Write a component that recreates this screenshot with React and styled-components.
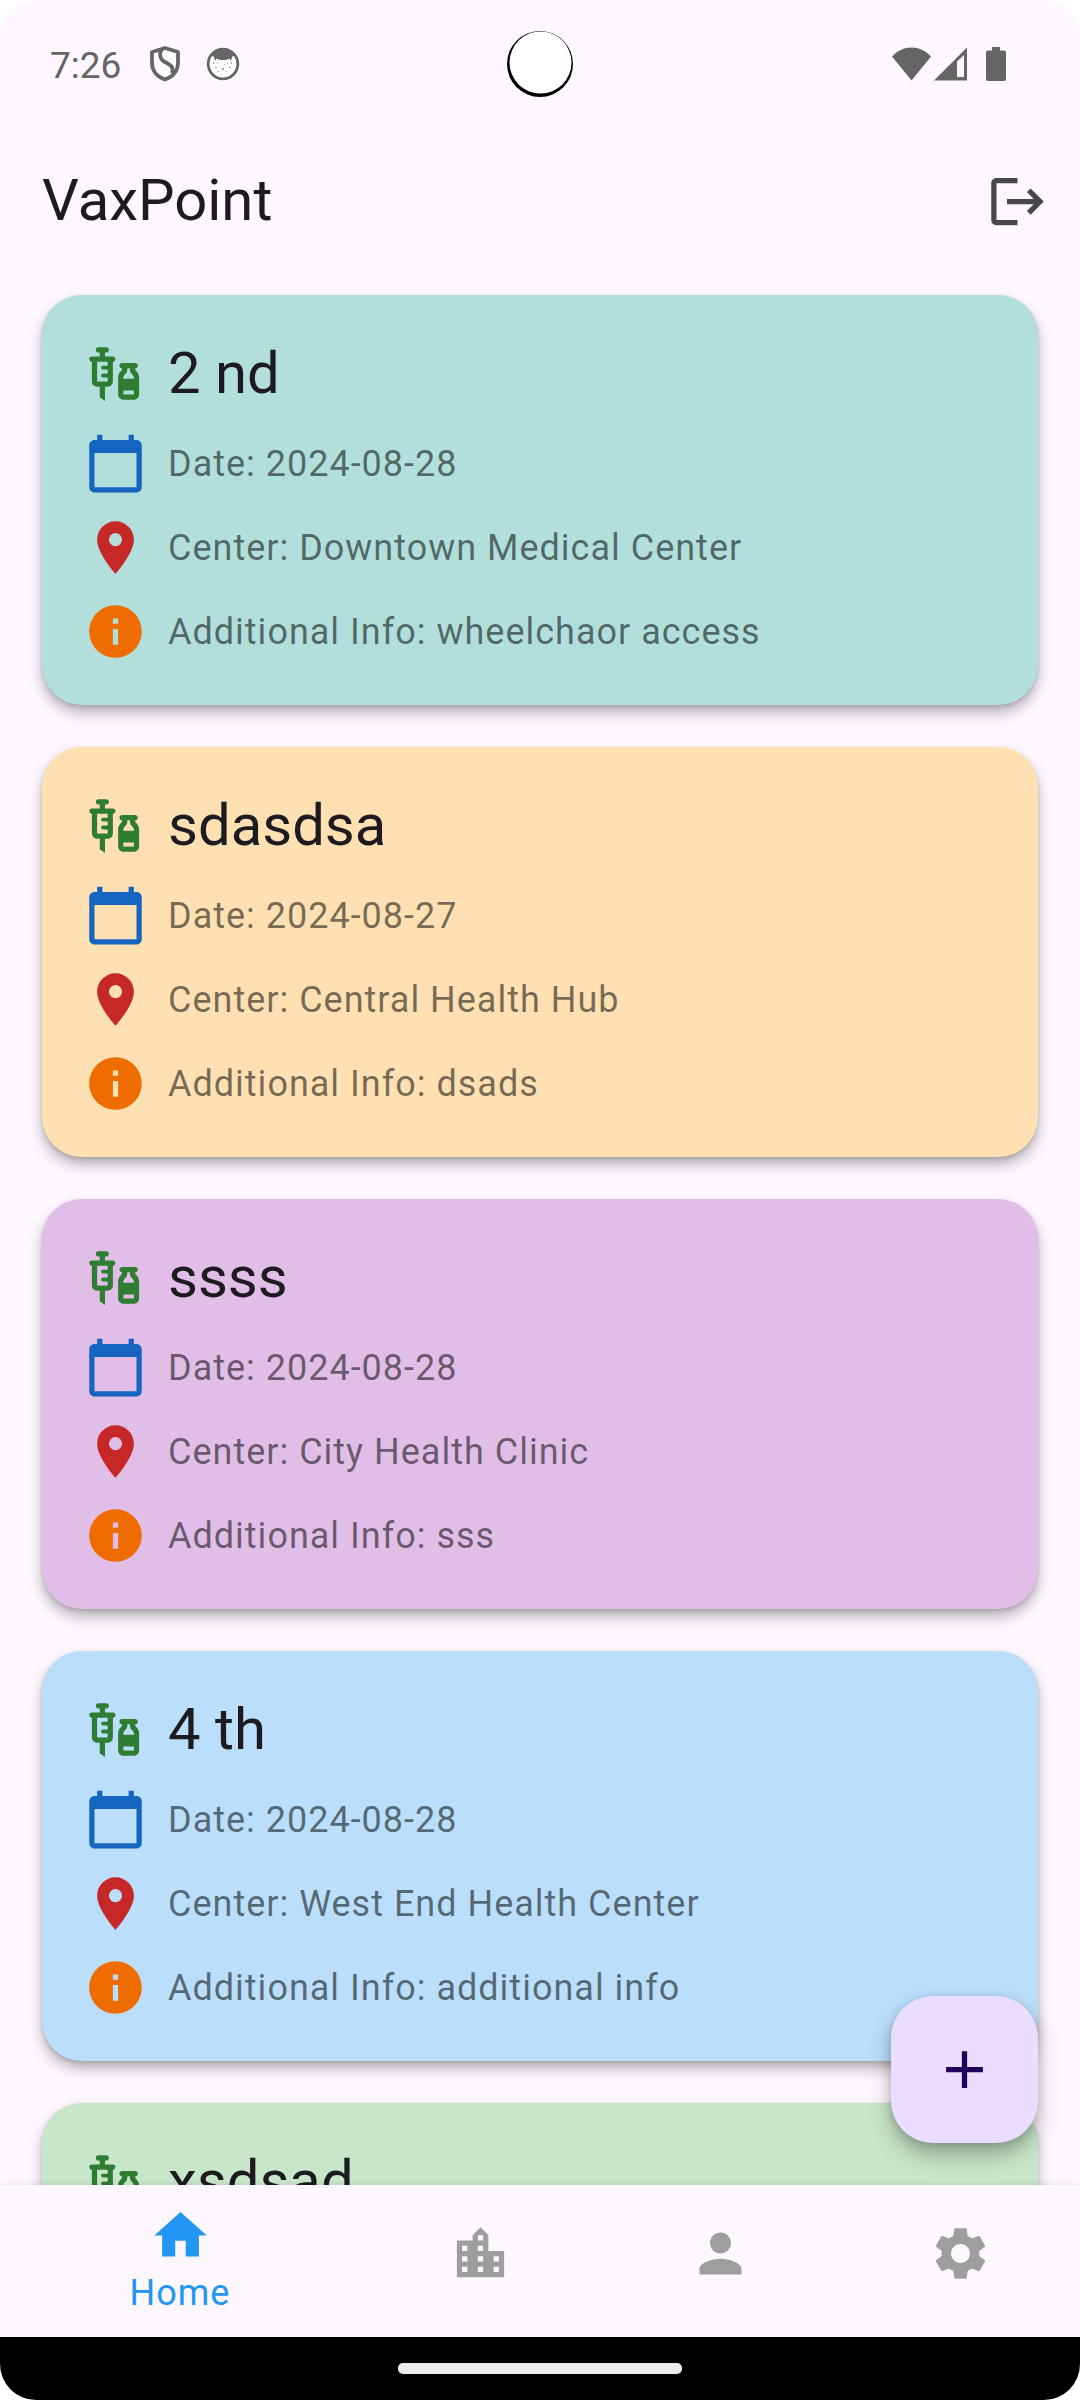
import React from "react";
import styled, { createGlobalStyle } from "styled-components";
import {
  MdAdd,
  MdCalendarToday,
  MdHome,
  MdInfo,
  MdLocationCity,
  MdLocationOn,
  MdLogout,
  MdPerson,
  MdSettings,
  MdVaccines,
} from "react-icons/md";

const GlobalStyle = createGlobalStyle`
  *, *::before, *::after { box-sizing: border-box; }
  body { margin: 0; background: #fff; }
  button { border: 0; padding: 0; font: inherit; color: inherit; background: none; cursor: pointer; }
  h1, h2, p, ul { margin: 0; padding: 0; font-weight: 400; }
`;

const Screen = styled.div`
  display: flex;
  flex-direction: column;
  height: 100vh;
  overflow: hidden;
  border-radius: 36px;
  background: #fef7ff;
  color: #1d1b20;
  font-family: Roboto, "Liberation Sans", sans-serif;
  font-size: 36px;
  line-height: 52px;
`;

const StatusBar = styled.div`
  display: grid;
  grid-template-columns: 1fr auto 1fr;
  align-items: center;
  flex: none;
  height: 126px;
  padding: 2px 50px 0;
  color: #666467;
`;

const StatusGroup = styled.div`
  display: flex;
  align-items: center;
  justify-content: ${(p) => (p.$end ? "flex-end" : "flex-start")};
  padding-right: ${(p) => (p.$end ? 24 : 0)}px;
`;

const Clock = styled.span`
  padding-top: 4px;
  margin-right: 29px;
  font-size: 37px;
`;

const StatusIcon = styled.svg`
  display: block;
  flex: none;
  margin-right: ${(p) => p.$gap || 0}px;
`;

const AppBar = styled.header`
  display: flex;
  align-items: center;
  justify-content: space-between;
  flex: none;
  height: 147px;
  padding-left: 42px;
`;

const AppTitle = styled.h1`
  font-size: 58px;
  line-height: 74px;
`;

const IconButton = styled.button`
  display: grid;
  place-items: center;
  width: 126px;
  height: 126px;
  padding-top: 4px;
  color: #49454f;
`;

const Content = styled.main`
  position: relative;
  flex: 1;
  min-height: 0;
  overflow: hidden;
`;

const CardList = styled.ul`
  display: flex;
  flex-direction: column;
  gap: 42px;
  padding: 22px 42px 0;
  list-style: none;
`;

const Card = styled.li`
  display: flex;
  flex-direction: column;
  gap: 21px;
  padding: 42px;
  border-radius: 40px;
  background: ${(p) => p.$color};
  box-shadow: 0 8px 14px rgba(0, 0, 0, 0.28), 0 2px 4px rgba(0, 0, 0, 0.12);
`;

const Row = styled.div`
  display: flex;
  align-items: center;
  gap: 21px;
  color: ${(p) => p.$color};

  svg {
    flex: none;
  }
`;

const TitleRow = styled(Row)`
  padding-bottom: 2px;
`;

const CardTitle = styled.h2`
  color: #1d1b20;
  font-size: 58px;
  line-height: 72px;
`;

const Detail = styled.p`
  color: rgba(0, 0, 0, 0.54);
  letter-spacing: 1px;
`;

const AddButton = styled.button`
  position: absolute;
  right: 42px;
  bottom: 42px;
  display: grid;
  place-items: center;
  width: 147px;
  height: 147px;
  border-radius: 42px;
  background: #eaddff;
  color: #21005d;
  box-shadow: 0 12px 22px rgba(0, 0, 0, 0.28), 0 2px 8px rgba(0, 0, 0, 0.14);
`;

const BottomNav = styled.nav`
  position: relative;
  display: flex;
  flex: none;
  height: 152px;
  background: #fef7ff;
  box-shadow: 0 0 6px rgba(0, 0, 0, 0.12);
`;

const NavItem = styled.button`
  display: flex;
  flex: ${(p) => (p.$active ? 3 : 2)} 1 0;
  flex-direction: column;
  align-items: center;
  justify-content: center;
  padding-bottom: ${(p) => (p.$active ? 0 : 16)}px;
  color: ${(p) => (p.$active ? "#2196f3" : "#9e9e9e")};
  letter-spacing: 1px;
`;

const GestureArea = styled.footer`
  display: grid;
  place-items: center;
  flex: none;
  height: 63px;
  background: #000;
`;

const GestureHandle = styled.div`
  width: 284px;
  height: 11px;
  border-radius: 5px;
  background: #ececec;
`;

const ICON = 63;

const appointments = [
  { title: "2 nd", color: "#b2dfdb", date: "2024-08-28", center: "Downtown Medical Center", info: "wheelchaor access" },
  { title: "sdasdsa", color: "#ffe0b2", date: "2024-08-27", center: "Central Health Hub", info: "dsads" },
  { title: "ssss", color: "#e1bee7", date: "2024-08-28", center: "City Health Clinic", info: "sss" },
  { title: "4 th", color: "#bbdefb", date: "2024-08-28", center: "West End Health Center", info: "additional info" },
  { title: "xsdsad", color: "#c8e6c9" },
];

const tabs = [
  { name: "Home", Icon: MdHome },
  { name: "Centers", Icon: MdLocationCity },
  { name: "Profile", Icon: MdPerson },
  { name: "Settings", Icon: MdSettings },
];

function Appointment({ title, color, date, center, info }) {
  return (
    <Card $color={color}>
      <TitleRow $color="#2e7d32">
        <MdVaccines size={ICON} />
        <CardTitle>{title}</CardTitle>
      </TitleRow>
      {date && (
        <Row $color="#1565c0">
          <MdCalendarToday size={ICON} />
          <Detail>Date: {date}</Detail>
        </Row>
      )}
      {center && (
        <Row $color="#c62828">
          <MdLocationOn size={ICON} />
          <Detail>Center: {center}</Detail>
        </Row>
      )}
      {info && (
        <Row $color="#ef6c00">
          <MdInfo size={ICON} />
          <Detail>Additional Info: {info}</Detail>
        </Row>
      )}
    </Card>
  );
}

function SystemStatus() {
  return (
    <StatusBar>
      <StatusGroup>
        <Clock>7:26</Clock>
        <StatusIcon $gap={26} width="30" height="36" viewBox="0 0 30 36" fill="none" stroke="currentColor" strokeWidth="3.8" strokeLinejoin="round">
          <path d="M15 2 28 6V17C28 25 22.500 31 15 33.500 7.500 31 2 25 2 17V6Z" fill="#fff" fillOpacity="0.5" />
          <path d="M12 3C9 7 9.500 12 14 15.500 21 19 24 21 22 27" />
        </StatusIcon>
        <StatusIcon width="34" height="34" viewBox="0 0 34 34" fill="currentColor">
          <circle cx="17" cy="17" r="14.800" fill="#fff" stroke="currentColor" strokeWidth="2.800" />
          <path d="M5 7C12-1 22-1 29 7L26 10 25 14 23.500 11.500C20 13.500 14 13.500 10.500 11.500L9 14 8 10Z" />
          <path
            opacity="0.600"
            d="M7 15h1v2h-1zM11 16h1v1h-1zM25 15h1v2h-1zM21 16h1v1h-1zM9 20h2v1h-2zM18 17h1v1h-1zM23 20h2v1h-2zM16 21h2v2h-2zM12 24h1v1h-1zM20 24h1v1h-1zM15 27h1v1h-1z"
          />
        </StatusIcon>
      </StatusGroup>
      <StatusIcon width="66" height="66" viewBox="0 0 66 66">
        <circle cx="33" cy="33" r="33" fill="#000" />
        <circle cx="33.500" cy="31.500" r="31" fill="#fff" />
      </StatusIcon>
      <StatusGroup $end>
        <StatusIcon $gap={3} width="39" height="34" viewBox="0 0 39 34" fill="currentColor">
          <path d="M0 9.500C11-2.500 28-2.500 39 9.500L19.500 33.500Z" />
        </StatusIcon>
        <StatusIcon $gap={19} width="33" height="34" viewBox="0 0 33 34">
          <path d="M0 33.500 33 .500V33.500Z" fill="currentColor" />
          <path d="M23 14.500 30 8V30H23Z" fill="#fef7ff" />
        </StatusIcon>
        <StatusIcon width="20" height="34" viewBox="0 0 20 34" fill="currentColor">
          <path d="M6 0h8v3.500h4a2 2 0 0 1 2 2V32a2 2 0 0 1-2 2H2a2 2 0 0 1-2-2V5.500a2 2 0 0 1 2-2h4Z" />
        </StatusIcon>
      </StatusGroup>
    </StatusBar>
  );
}

export default function App() {
  return (
    <>
      <GlobalStyle />
      <Screen>
        <SystemStatus />
        <AppBar>
          <AppTitle>VaxPoint</AppTitle>
          <IconButton type="button" aria-label="Log out">
            <MdLogout size={ICON} />
          </IconButton>
        </AppBar>
        <Content>
          <CardList>
            {appointments.map((item) => (
              <Appointment key={item.title} {...item} />
            ))}
          </CardList>
          <AddButton type="button" aria-label="Add">
            <MdAdd size={ICON} />
          </AddButton>
        </Content>
        <BottomNav>
          {tabs.map(({ name, Icon }, index) => (
            <NavItem key={name} type="button" aria-label={name} $active={index === 0}>
              <Icon size={ICON} />
              {index === 0 && <span>{name}</span>}
            </NavItem>
          ))}
        </BottomNav>
        <GestureArea>
          <GestureHandle />
        </GestureArea>
      </Screen>
    </>
  );
}
